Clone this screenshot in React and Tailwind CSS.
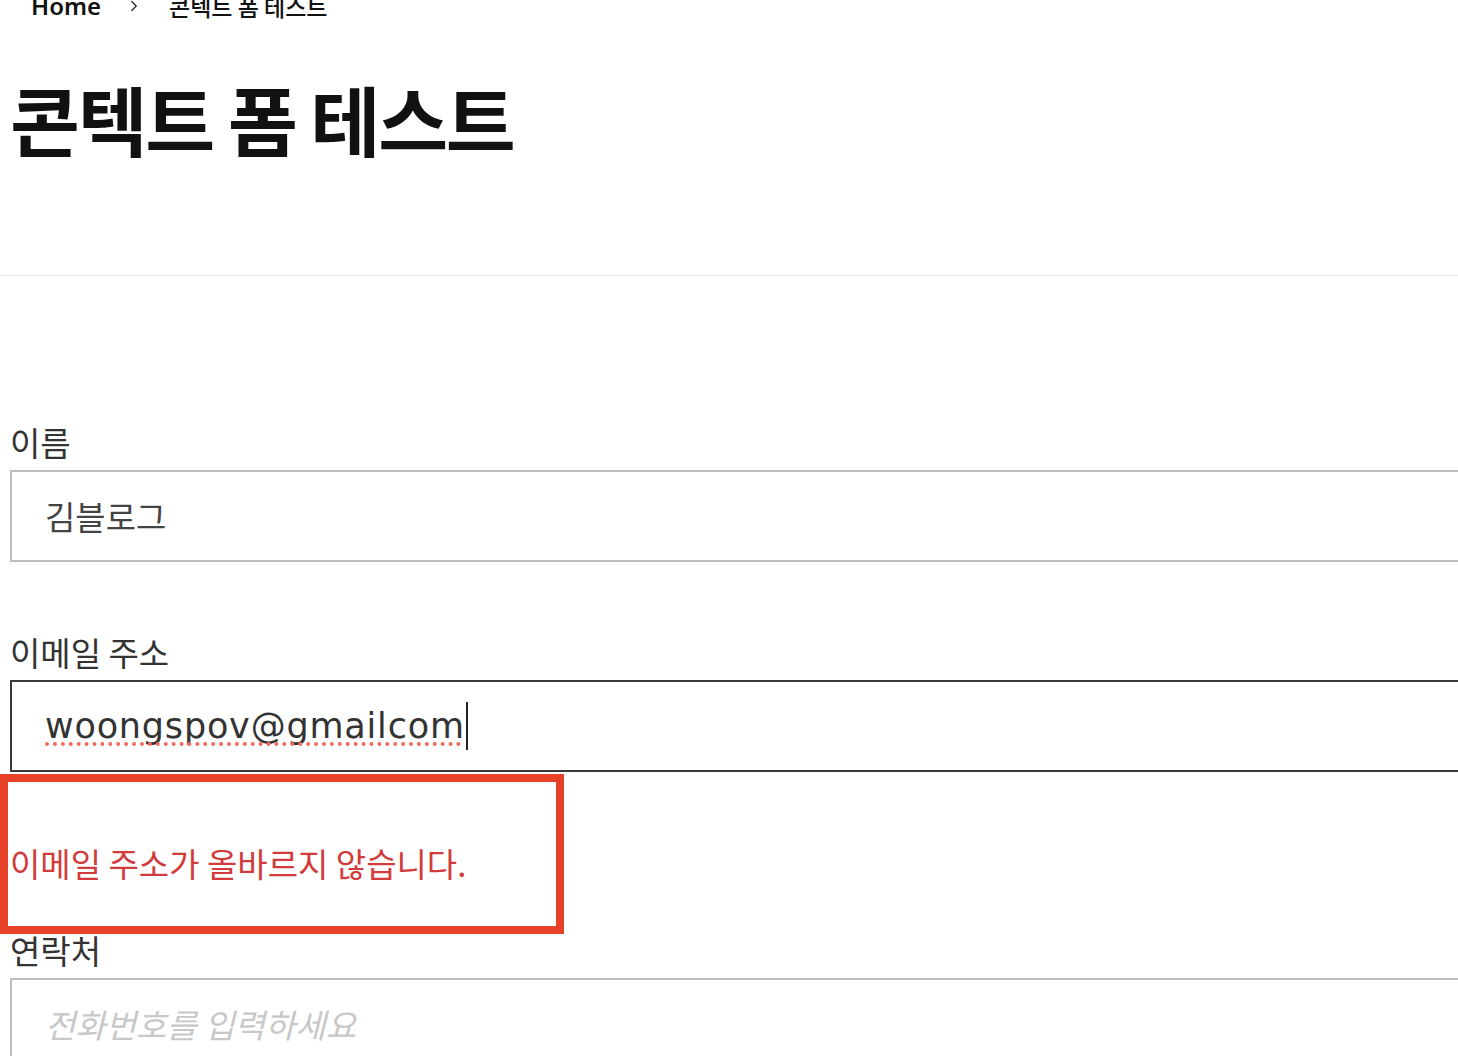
import React, { useState } from 'react';
import { ChevronRight } from 'lucide-react';

const font = {
  fontFamily: '"Noto Sans CJK KR", "Noto Sans", sans-serif',
};

const latin = { fontFamily: '"DejaVu Sans", "Noto Sans", sans-serif' };

const Field = ({ label, children }) => (
  <div className="flex flex-col">
    <label className="mb-[7px] text-[33px] leading-[42px] text-[#333]">{label}</label>
    {children}
  </div>
);

const App = () => {
  const [name, setName] = useState('김블로그');
  const [email, setEmail] = useState('woongspov@gmailcom');
  const [phone, setPhone] = useState('');

  return (
    <div className="relative h-[1056px] overflow-hidden bg-white" style={font}>
      <nav className="-mt-[8px] flex h-[28px] items-center pl-[31px] text-[23px] leading-[28px] text-[#111]">
        <span className="text-[24px] font-semibold" style={{ fontFamily: '"Noto Sans", sans-serif' }}>Home</span>
        <ChevronRight className="ml-[24px] mr-[26px] text-[#222]" size={18} strokeWidth={1.6} />
        <span className="font-medium">콘텍트 폼 테스트</span>
      </nav>

      <h1 className="mt-[58px] pl-[10px] text-[76px] font-bold leading-[80px] tracking-[-0.03em] text-[#111]">
        콘텍트 폼 테스트
      </h1>

      <hr className="mt-[117px] border-0 border-t border-[#e6e6e6]" />

      <form className="flex flex-col pl-[10px] pt-[145px]" onSubmit={(e) => e.preventDefault()}>
        <Field label="이름">
          <input
            className="h-[92px] border-2 border-r-0 border-[#bdbdbd] px-[33px] text-[33px] text-[#444] outline-none"
            value={name}
            onChange={(e) => setName(e.target.value)}
          />
        </Field>

        <div className="mt-[69px]">
          <Field label="이메일 주소">
            <div className="relative flex">
              <input
                className="h-[92px] w-full border-2 border-r-0 border-[#3a3a3a] px-[33px] text-[35px] tracking-[0.8px] text-[#333] outline-none"
                style={latin}
                value={email}
                onChange={(e) => setEmail(e.target.value)}
                spellCheck
              />
              <span className="pointer-events-none absolute left-[35px] top-[62px] h-0 w-[416px] border-b-[4px] border-dotted border-[#f26b5e]" />
              <span className="pointer-events-none absolute left-[456px] top-[22px] h-[48px] w-[2px] bg-[#222]" />
            </div>
          </Field>
        </div>

        <p className="mt-[70px] text-[33px] leading-[42px] text-[#d23b3b]">
          이메일 주소가 올바르지 않습니다.
        </p>

        <div className="mt-[45px]">
          <Field label="연락처">
            <input
              className="h-[92px] border-2 border-r-0 border-[#bdbdbd] px-[33px] text-[33px] text-[#444] outline-none placeholder:italic placeholder:text-[#c8c8c8]"
              placeholder="전화번호를 입력하세요"
              value={phone}
              onChange={(e) => setPhone(e.target.value)}
            />
          </Field>
        </div>
      </form>

      <div className="pointer-events-none absolute left-0 top-[774px] h-[160px] w-[564px] border-[8px] border-[#e8412a]" />
    </div>
  );
};

export default App;
